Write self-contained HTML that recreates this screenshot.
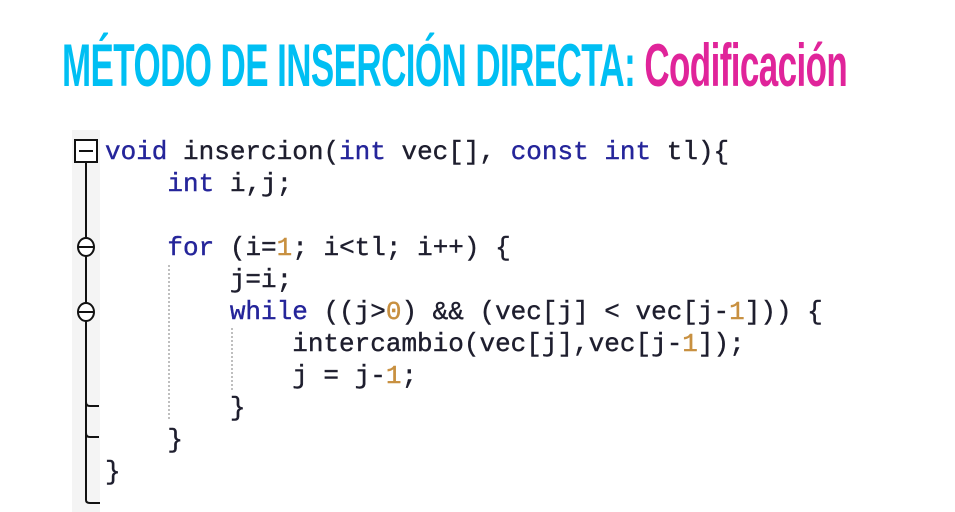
<!DOCTYPE html>
<html><head><meta charset="utf-8"><style>
body{margin:0;width:955px;height:512px;background:#fff;overflow:hidden;position:relative}
.t{position:absolute;left:62px;top:34px;font-family:"Liberation Sans",sans-serif;font-weight:bold;font-size:60px;line-height:64px;white-space:nowrap;transform-origin:0 0;transform:scaleX(0.583);letter-spacing:-1px}
.c{color:#00bff3}.m{color:#e0249a}
.code{position:absolute;left:105px;top:136px;font-family:"Courier New","Liberation Mono",monospace;font-size:26px;line-height:32px;white-space:pre;color:#1e1e2e;margin:0;-webkit-text-stroke:0.4px}
.k{color:#25259a}.n{color:#c89040}
.g{position:absolute;left:72px;top:130px;width:28px;height:382px;background:#f4f4f4}
</style></head><body>
<div class="g"></div>
<div class="t"><span class="c">MÉTODO DE INSERCIÓN DIRECTA:</span> <span class="m">Codificación</span></div>
<svg width="955" height="512" style="position:absolute;left:0;top:0">
<g stroke="#111" stroke-width="2" fill="none">
<rect x="75" y="140" width="22" height="22" fill="#fff"/>
<line x1="79" y1="151" x2="93" y2="151"/>
<line x1="86" y1="162" x2="86" y2="238"/>
<ellipse cx="86" cy="247" rx="8" ry="9" fill="#fff"/>
<line x1="79" y1="247" x2="93" y2="247"/>
<line x1="86" y1="256" x2="86" y2="303"/>
<ellipse cx="86" cy="312" rx="8" ry="9" fill="#fff"/>
<line x1="79" y1="312" x2="93" y2="312"/>
<path d="M86 321 V500 Q86 503 90 503 H100"/>
<path d="M86 402 Q86 406 90 406 H99"/>
<path d="M86 433 Q86 437 90 437 H99"/>
</g>
<g stroke="#aaa" stroke-width="1.5" stroke-dasharray="2 2">
<line x1="169" y1="265" x2="169" y2="420"/>
<line x1="232" y1="328" x2="232" y2="390"/>
</g>
</svg>
<pre class="code"><span class="k">void</span> insercion(<span class="k">int</span> vec[], <span class="k">const int</span> tl){
    <span class="k">int</span> i,j;

    <span class="k">for</span> (i=<span class="n">1</span>; i&lt;tl; i++) {
        j=i;
        <span class="k">while</span> ((j&gt;<span class="n">0</span>) &amp;&amp; (vec[j] &lt; vec[j-<span class="n">1</span>])) {
            intercambio(vec[j],vec[j-<span class="n">1</span>]);
            j = j-<span class="n">1</span>;
        }
    }
}</pre>
</body></html>
